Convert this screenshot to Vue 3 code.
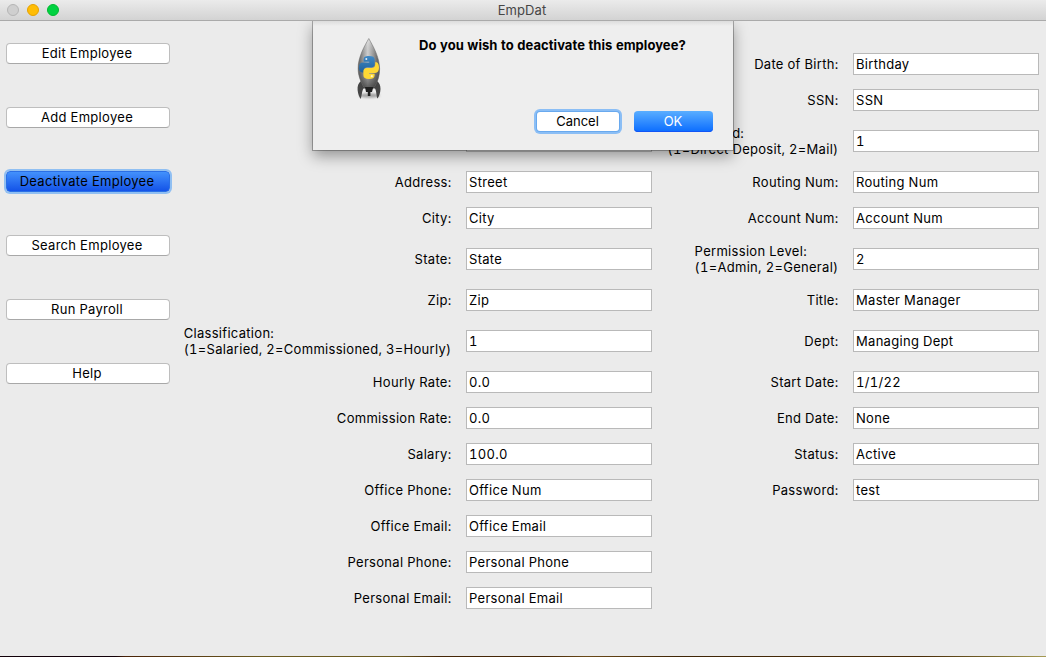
<script setup>
const actions = [
  { label: 'Edit Employee' },
  { label: 'Add Employee' },
  { label: 'Deactivate Employee', active: true },
  { label: 'Search Employee' },
  { label: 'Run Payroll' },
  { label: 'Help' },
]

const personal = [
  { label: '', value: '' },
  { label: '', value: '' },
  { label: '', value: '', tall: true },
  { label: 'Address:', value: 'Street' },
  { label: 'City:', value: 'City' },
  { label: 'State:', value: 'State', tall: true },
  { label: 'Zip:', value: 'Zip' },
  { label: 'Classification:', hint: '(1=Salaried, 2=Commissioned, 3=Hourly)', value: '1', tall: true },
  { label: 'Hourly Rate:', value: '0.0' },
  { label: 'Commission Rate:', value: '0.0' },
  { label: 'Salary:', value: '100.0' },
  { label: 'Office Phone:', value: 'Office Num' },
  { label: 'Office Email:', value: 'Office Email' },
  { label: 'Personal Phone:', value: 'Personal Phone' },
  { label: 'Personal Email:', value: 'Personal Email' },
]

const company = [
  { label: 'Date of Birth:', value: 'Birthday' },
  { label: 'SSN:', value: 'SSN' },
  { label: 'Pay Method:', hint: '(1=Direct Deposit, 2=Mail)', value: '1', tall: true, tight: true },
  { label: 'Routing Num:', value: 'Routing Num' },
  { label: 'Account Num:', value: 'Account Num' },
  { label: 'Permission Level:', hint: '(1=Admin, 2=General)', value: '2', tall: true },
  { label: 'Title:', value: 'Master Manager' },
  { label: 'Dept:', value: 'Managing Dept', tall: true },
  { label: 'Start Date:', value: '1/1/22' },
  { label: 'End Date:', value: 'None' },
  { label: 'Status:', value: 'Active' },
  { label: 'Password:', value: 'test' },
]
</script>

<template>
  <div class="window">
    <header class="titlebar">
      <div class="lights">
        <i class="light off"></i><i class="light amber"></i><i class="light green"></i>
      </div>
      <span class="title">EmpDat</span>
    </header>

    <main class="content">
      <nav class="sidebar">
        <button v-for="a in actions" :key="a.label" class="action" :class="{ active: a.active }">{{ a.label }}</button>
      </nav>
      <section class="column personal">
        <div v-for="(f, i) in personal" :key="i" class="row" :class="{ tall: f.tall }">
          <div class="label">
            <div>{{ f.label }}</div>
            <div v-if="f.hint">{{ f.hint }}</div>
          </div>
          <div class="field">{{ f.value }}</div>
        </div>
      </section>
      <section class="column company">
        <div v-for="(f, i) in company" :key="i" class="row" :class="{ tall: f.tall }">
          <div class="label">
            <div :class="{ tight: f.tight }">{{ f.label }}</div>
            <div v-if="f.hint">{{ f.hint }}</div>
          </div>
          <div class="field">{{ f.value }}</div>
        </div>
      </section>
    </main>
    <div class="desktop-edge"></div>

    <div class="sheet">
      <svg class="rocket" width="28" height="64" viewBox="0 0 28 64">
        <defs>
          <linearGradient id="hull" x1="0" x2="1" y1="0" y2="0">
            <stop offset="0" stop-color="#5c5c5c" />
            <stop offset=".22" stop-color="#959595" />
            <stop offset=".45" stop-color="#d2d2d2" />
            <stop offset=".7" stop-color="#999" />
            <stop offset="1" stop-color="#505050" />
          </linearGradient>
          <linearGradient id="shade" x1="0" x2="0" y1="0" y2="1">
            <stop offset="0" stop-color="#fff" stop-opacity=".4" />
            <stop offset=".4" stop-color="#888" stop-opacity="0" />
            <stop offset="1" stop-color="#222" stop-opacity=".65" />
          </linearGradient>
          <linearGradient id="blue" x1="0" x2="0" y1="0" y2="1">
            <stop offset="0" stop-color="#3f89c6" />
            <stop offset="1" stop-color="#205f99" />
          </linearGradient>
          <filter id="soft" x="-20%" y="-60%" width="140%" height="220%"><feGaussianBlur stdDeviation="1" /></filter>
        </defs>
        <ellipse cx="14.5" cy="58.5" rx="10.5" ry="2.2" fill="#777" opacity=".65" filter="url(#soft)" />
        <path d="M6 44C3.3 46 2.300 49 2.600 53C2.900 57 4.300 60 5.600 62C6.800 60 6.700 54 8.500 51.500H20C21.600 54 21.300 60 22.500 61.500C24 59.500 25.400 56 25.500 52C25.600 48.500 24.300 45.500 22 44Z" fill="#454545" />
        <path d="M13.800 1.500C9.500 9 3 20 3.100 31.500C3.200 40 6.500 46 8.800 50H19.400C21.900 46 24.700 40 24.600 31.500C24.500 20 18 9 13.800 1.500Z" fill="url(#hull)" />
        <path d="M13.800 1.500C9.500 9 3 20 3.100 31.500C3.200 40 6.500 46 8.800 50H19.400C21.900 46 24.700 40 24.600 31.500C24.500 20 18 9 13.800 1.500Z" fill="url(#shade)" stroke="#666" stroke-width=".5" />
        <path d="M10 50H18.300L17 55H15.400V59H12.800V55H11Z" fill="#202020" />
        <path d="M8.600 22.500C8.600 20 10.200 19 14 19C17.800 19 19.700 20 19.700 22.500V27C19.700 29.400 18.400 30.400 16 30.400H12C10 30.400 8.700 31.400 8.700 33.400V35.500H7.300C4.900 35.500 4 33.500 4 30.600C4 27.400 5.200 25.600 8 25.600H14.300V24.700H8.600Z" fill="url(#blue)" />
        <path d="M20.200 25.300H21C23.200 25.300 24 27.800 24 30.800C24 33.900 22.800 35.900 20 35.900H14V36.700H19.600V38.500C19.600 41 17.600 42 14 42C10.200 42 8.400 41 8.400 38.300V34.500C8.400 32.200 9.800 31 12.200 31H16.500C18.900 31 20.200 29.800 20.200 27.500Z" fill="#fdd835" />
        <circle cx="11.300" cy="21.900" r="1" fill="#e6eef5" />
        <circle cx="16.800" cy="39.200" r="1.100" fill="#fff8c8" />
      </svg>
      <div class="message">Do you wish to deactivate this employee?</div>
      <div class="choices">
        <button class="choice cancel">Cancel</button>
        <button class="choice ok">OK</button>
      </div>
    </div>
  </div>
</template>

<style>
body { margin: 0; overflow: hidden; }
</style>

<style scoped>
.window {
  position: relative;
  display: flex;
  flex-direction: column;
  width: 1046px;
  height: 657px;
  overflow: hidden;
  background: #ebebeb;
  color: #000;
  font: 13px/16px Inter, Roboto, "Liberation Sans", sans-serif;
  font-variant-numeric: tabular-nums;
  letter-spacing: 0.3px;
}
.titlebar {
  display: grid;
  grid-template-columns: 60px 1fr 62px;
  align-items: center;
  box-sizing: border-box;
  height: 21px;
  flex: none;
  border-bottom: 1px solid #aaa;
  background: linear-gradient(#ebebeb, #d3d3d3);
}
.lights { display: flex; gap: 8px; padding-left: 7px; }
.light { box-sizing: border-box; width: 12px; height: 12px; border-radius: 50%; border: 1px solid; }
.off { background: #cfcfcf; border-color: #b5b5b5; }
.amber { background: #ffbd05; border-color: #e6a100; }
.green { background: #00d241; border-color: #00b92f; }
.title { text-align: center; color: #464646; letter-spacing: 0.1px; }
.content { display: flex; flex: 1; }
.sidebar { display: flex; flex-direction: column; gap: 43px; width: 164px; padding: 22px 0 0 6px; }
button { font: inherit; letter-spacing: inherit; color: inherit; padding: 0; margin: 0; }
.action {
  box-sizing: border-box;
  height: 21px;
  flex: none;
  padding-right: 2px;
  border: 1px solid #bebebe;
  border-bottom-color: #a8a8a8;
  border-radius: 4px;
  background: #fff;
  line-height: 19px;
}
.action.active {
  border-color: #2a6fe6;
  background: linear-gradient(#4391fc, #1353e8);
  box-shadow: 0 0 0 2px #90bff2;
}
.column { display: flex; flex-direction: column; padding-top: 25px; }
.personal { width: 482px; }
.company { width: 387px; }
.row { display: flex; align-items: center; justify-content: flex-end; height: 36px; }
.row.tall { height: 46px; }
.label { white-space: nowrap; margin-right: 14.5px; }
.tight { letter-spacing: 0; margin-left: -0.5px; }
.field {
  box-sizing: border-box;
  width: 186px;
  height: 22px;
  padding: 2px;
  border: 1px solid #b9b9b9;
  background: #fff;
}
.desktop-edge {
  height: 1px;
  flex: none;
  background: linear-gradient(90deg, #120009 0 11%, #4a2308 12%, #6b5a20 25%, #6b5a20 38%, #452607 42%, #452607 52%, #6b4a18 56%, #3f2506 65%, #4a2d08 88%, #77662c 95%, #a79c55);
}
.sheet {
  position: absolute;
  left: 313px;
  top: 21px;
  width: 420px;
  height: 129px;
  background: linear-gradient(#dcdcdc, #eee 5px);
  box-shadow: 0 0 0 1px rgba(0, 0, 0, .28), 0 6px 14px rgba(0, 0, 0, .38);
  clip-path: inset(0 -30px -30px -30px);
  display: grid;
  grid-template-columns: 106px 1fr;
  grid-template-rows: 90px 1fr;
}
.rocket { margin: 16px 0 0 42px; }
.message { padding-top: 16px; font-weight: 700; letter-spacing: 0.05px; white-space: nowrap; }
.choices { grid-column: 1 / 3; display: flex; justify-content: flex-end; gap: 15px; padding-right: 20px; letter-spacing: 0; }
.choice { box-sizing: border-box; height: 21px; border-radius: 4px; border: 0; line-height: 21px; }
.cancel { width: 82px; height: 19px; line-height: 19px; margin-top: 1px; padding-right: 1px; background: #fff; box-shadow: 0 0 0 1px #69a9ee, 0 0 0 3px #8bbef5; border-radius: 3px; }
.ok { width: 79px; padding-right: 1px; color: #fff; background: linear-gradient(#5aaeff, #0a6cff); box-shadow: inset 0 -1px #1255f5; }
</style>
